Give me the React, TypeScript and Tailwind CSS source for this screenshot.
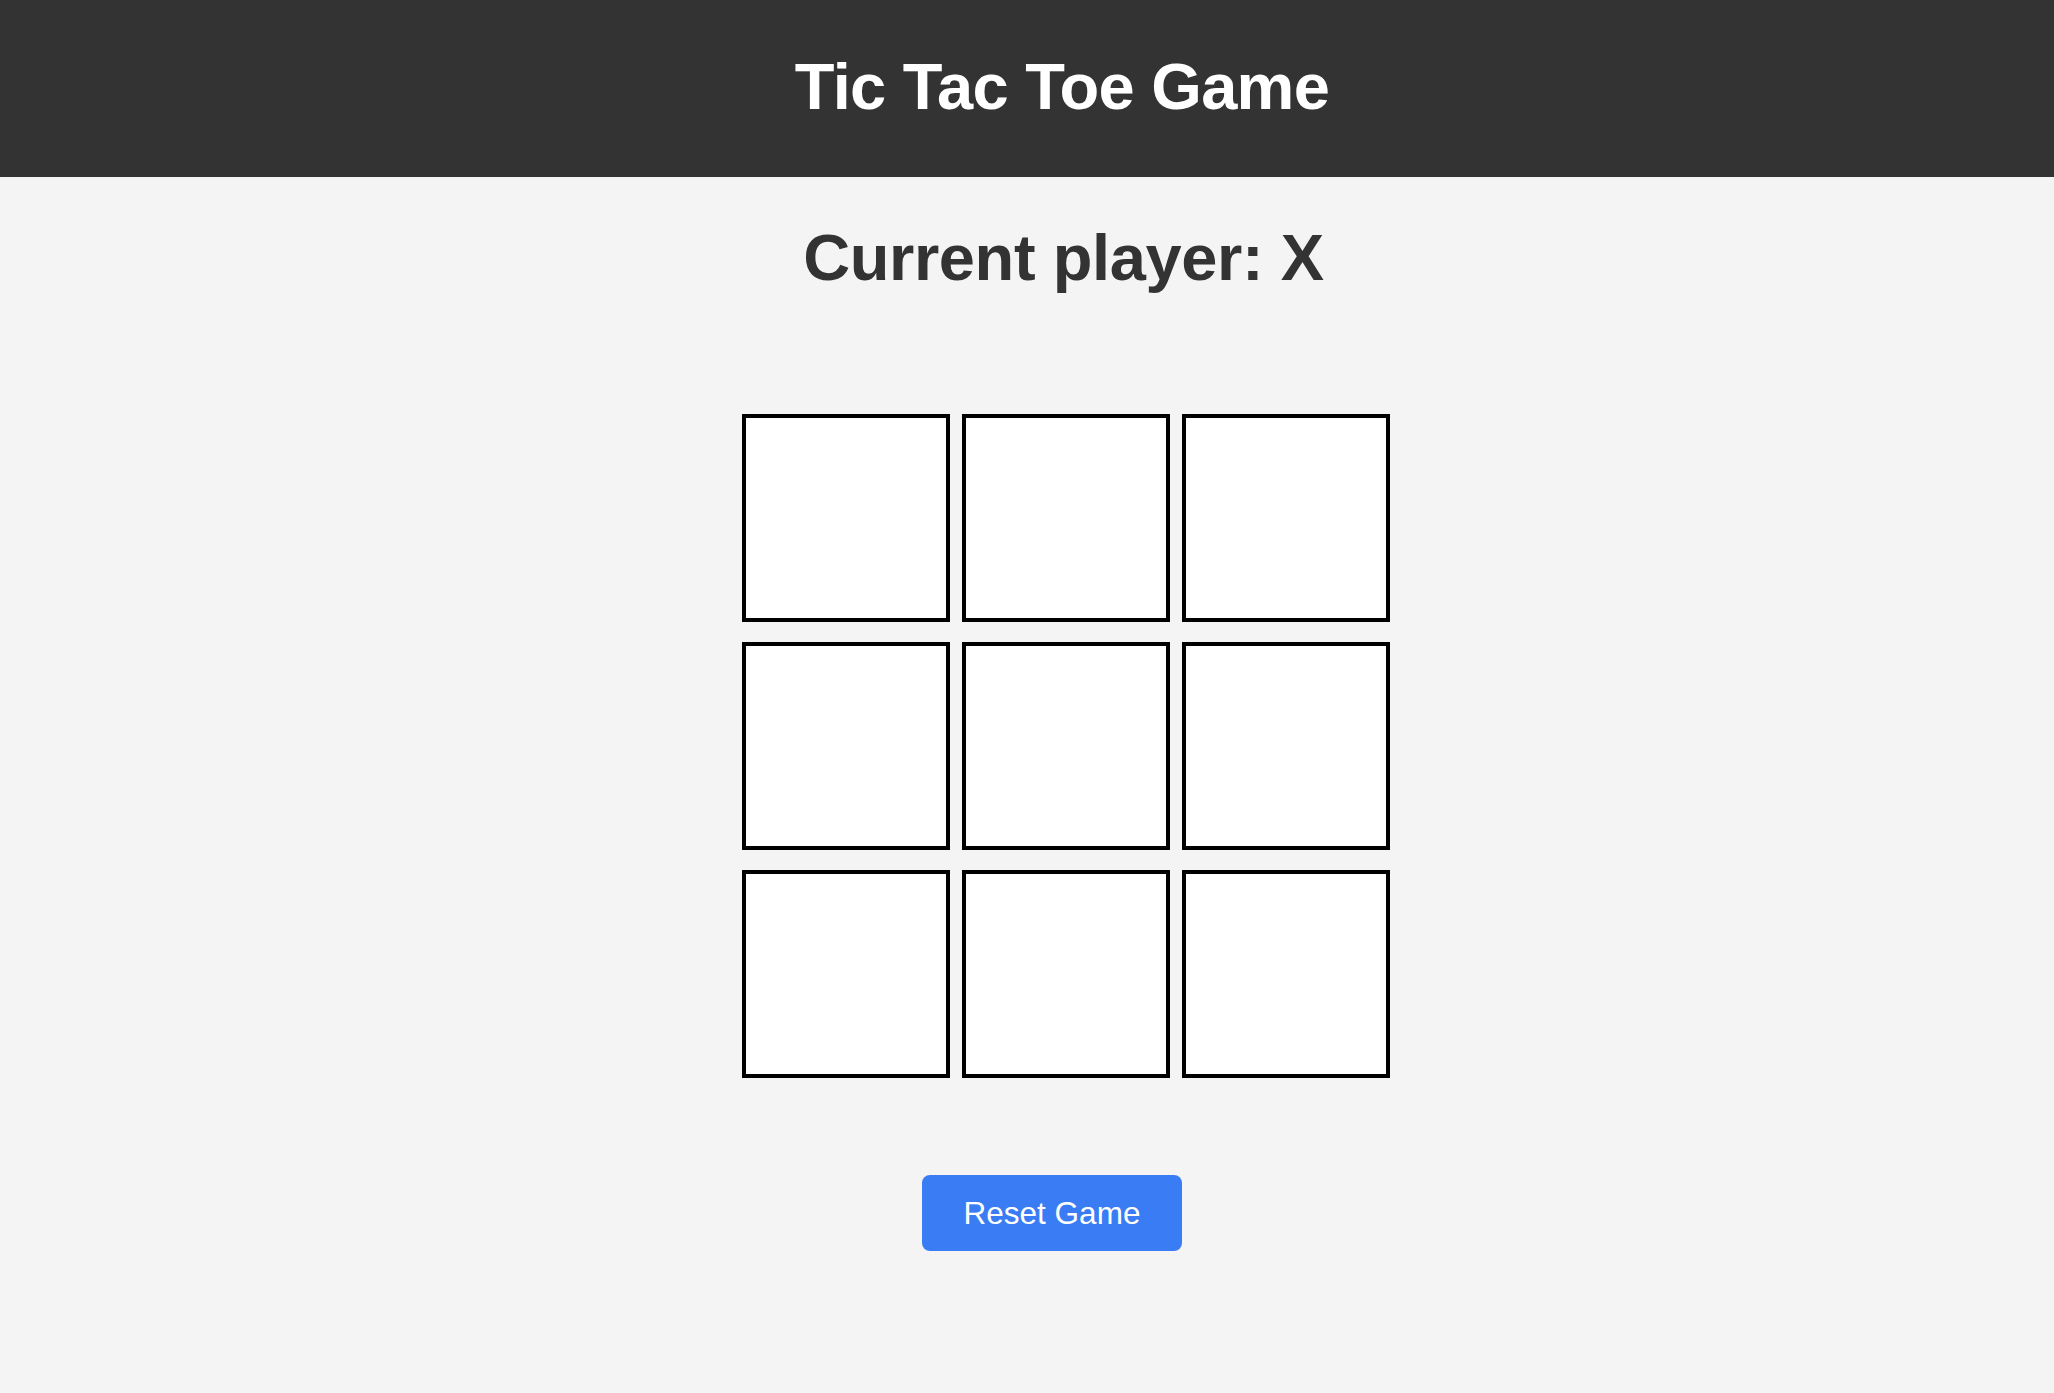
import React, { useState } from "react";

const App = () => {
  const [board, setBoard] = useState<(string | null)[]>(Array(9).fill(null));
  const [player, setPlayer] = useState("X");

  const handleClick = (i: number) => {
    if (board[i]) return;
    const next = [...board];
    next[i] = player;
    setBoard(next);
    setPlayer(player === "X" ? "O" : "X");
  };

  const resetGame = () => {
    setBoard(Array(9).fill(null));
    setPlayer("X");
  };

  return (
    <div className="min-h-screen bg-[#f4f4f4] font-['Liberation_Sans',Arial,sans-serif]">
      <header className="h-[177px] bg-[#333333] flex justify-center pt-[54px]">
        <h1 className="text-[65px] leading-none font-bold text-white tracking-[-0.7px] ml-[70px] whitespace-nowrap">
          Tic Tac Toe Game
        </h1>
      </header>
      <main className="flex flex-col items-center">
        <h2 className="mt-[48px] text-[65px] leading-none font-bold text-[#333333] tracking-[-0.4px] ml-[73px] whitespace-nowrap">
          Current player: {player}
        </h2>
        <div className="mt-[124px] ml-[78px] grid grid-cols-[208px_208px_208px] gap-x-[12px] gap-y-[20px]">
          {board.map((cell, i) => (
            <button
              key={i}
              onClick={() => handleClick(i)}
              className="w-[208px] h-[208px] border-4 border-black bg-white text-[80px] font-bold text-[#333333]"
            >
              {cell}
            </button>
          ))}
        </div>
        <button
          onClick={resetGame}
          className="mt-[97px] ml-[50px] w-[260px] h-[76px] flex items-center justify-center pt-[2px] rounded-[8px] bg-[#397cf4] text-white text-[31.5px] leading-none"
        >
          Reset Game
        </button>
      </main>
    </div>
  );
};

export default App;
